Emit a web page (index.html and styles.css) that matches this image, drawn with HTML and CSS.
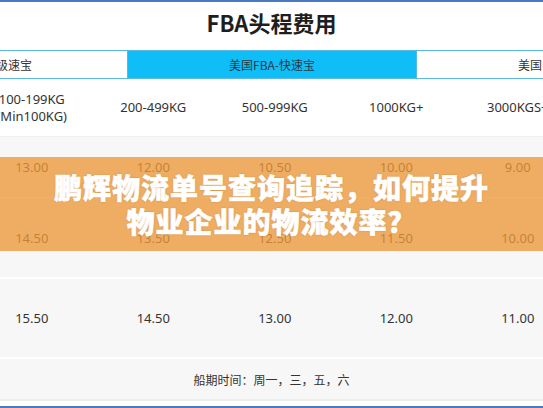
FILE: index.html
```html
<!DOCTYPE html>
<html lang="zh">
<head>
<meta charset="utf-8">
<link rel="stylesheet" href="styles.css">
</head>
<body>
<div class="frame">
  <h1 class="title">FBA头程费用</h1>
  <div class="tabs">
    <div class="tab">美国FBA-超级速宝</div>
    <div class="tab active">美国FBA-快速宝</div>
    <div class="tab">美国FBA-标准宝</div>
  </div>
  <div class="table">
    <div class="row head">
      <div class="cell">100-199KG<br>(Min100KG)</div>
      <div class="cell">200-499KG</div>
      <div class="cell">500-999KG</div>
      <div class="cell">1000KG+</div>
      <div class="cell">3000KGS+</div>
    </div>
    <div class="row r1">
      <div class="cell">13.00</div>
      <div class="cell">12.00</div>
      <div class="cell">10.50</div>
      <div class="cell">10.00</div>
      <div class="cell">9.00</div>
    </div>
    <div class="row r2">
      <div class="cell">14.50</div>
      <div class="cell">13.50</div>
      <div class="cell">12.50</div>
      <div class="cell">11.50</div>
      <div class="cell">10.00</div>
    </div>
    <div class="row r3">
      <div class="cell">15.50</div>
      <div class="cell">14.50</div>
      <div class="cell">13.00</div>
      <div class="cell">12.00</div>
      <div class="cell">11.00</div>
    </div>
    <div class="foot">船期时间：周一，三，五，六</div>
  </div>
  <div class="banner">
    <p class="banner-text">鹏辉物流单号查询追踪，如何提升<br>物业企业的物流效率？</p>
  </div>
</div>
</body>
</html>
```
FILE: styles.css
```css
* { box-sizing: border-box; }
html, body { margin: 0; padding: 0; background: #fff; }
body {
  width: 543px;
  height: 408px;
  overflow: hidden;
  font-family: "Noto Sans", "Noto Sans CJK SC", sans-serif;
  color: #333;
}
.frame {
  position: relative;
  height: 408px;
  border-top: 2px solid #4a79c0;
  border-bottom: 2px solid #4a79c0;
  overflow: hidden;
}
.title {
  margin: 0;
  height: 48px;
  line-height: 40px;
  text-align: center;
  font-size: 22px;
  font-weight: 700;
  color: #1e1e1e;
  font-family: "Noto Sans CJK SC", sans-serif;
}
.tabs {
  display: grid;
  grid-template-columns: repeat(3, 289px);
  margin-left: -161px;
  height: 29px;
  border-top: 1px solid #5ab8e4;
  border-bottom: 1px solid #5ab8e4;
}
.tab {
  font-family: "Noto Sans CJK SC", sans-serif;
  font-size: 12px;
  line-height: 27px;
  text-align: center;
  color: #333;
  background: #fff;
  border-right: 1px solid #5ab8e4;
}
.tab.active {
  background: #0fbdf7;
  color: #2a3a44;
}
.table {
  display: flex;
  flex-direction: column;
  gap: 2px;
}
.row {
  display: grid;
  grid-template-columns: repeat(5, 121.5px);
  margin-left: -29px;
  align-items: center;
  background: #f7f7f7;
  font-size: 13px;
}
.cell {
  text-align: center;
  line-height: 17px;
  white-space: nowrap;
}
.row.head {
  background: #fff;
  height: 58px;
  color: #333;
  border-bottom: 1px solid #f0f0f0;
}
.row.r1 { height: 60px; margin-top: -2px; }
.row.r2 { height: 78px; }
.row.r3 { height: 78px; }
.foot {
  background: #f7f7f7;
  height: 42px;
  line-height: 42px;
  text-align: center;
  font-size: 12px;
  font-family: "Noto Sans CJK SC", sans-serif;
  color: #333;
  border-bottom: 2px solid #ededed;
}
.banner {
  position: absolute;
  left: 0;
  right: 0;
  top: 155px;
  height: 94px;
  background: rgba(236, 152, 56, 0.78);
  display: flex;
  align-items: center;
  justify-content: center;
}
.banner-text {
  margin: 0;
  text-align: center;
  color: #fff;
  font-family: "Noto Sans CJK SC", sans-serif;
  font-weight: 900;
  font-size: 28px;
  line-height: 34px;
  letter-spacing: 1px;
  -webkit-text-stroke: 0.6px #fff;
  text-shadow: 0 0 2px rgba(120, 70, 20, 0.35);
}
```
